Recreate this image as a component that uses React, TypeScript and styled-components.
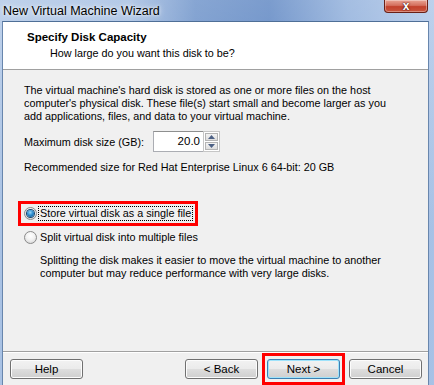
import React from "react";
import styled, { createGlobalStyle } from "styled-components";

const Global = createGlobalStyle`
  html, body { margin: 0; padding: 0; background: #6f93c6; }
  body { font-family: "Liberation Sans", Arial, sans-serif; font-size: 10.8px; color: #000; }
  * { box-sizing: border-box; }
`;

const Window = styled.div`
  width: 434px;
  height: 385px;
  display: flex;
  flex-direction: column;
  padding: 0 5px 0 2px;
  background:
    linear-gradient(to bottom, rgba(255,255,255,0.25), rgba(255,255,255,0) 60%),
    linear-gradient(to right, #a9c2e4 0%, #9cb8df 30%, #5f88c4 45%, #4f7bbd 62%, #86a8d8 80%, #a8c2e6 100%);
  overflow: hidden;
`;

const TitleBar = styled.div`
  height: 21px;
  flex: none;
  display: flex;
  align-items: flex-start;
  justify-content: space-between;
  padding-left: 1px;
`;

const Title = styled.div`
  font-family: "Liberation Sans", Arial, sans-serif;
  font-size: 12.5px;
  line-height: 12px;
  margin-top: 5px;
  color: #000;
  text-shadow: 0 0 6px rgba(255,255,255,0.9), 0 0 3px rgba(255,255,255,0.8);
`;

const CloseButton = styled.div`
  width: 44px;
  height: 13px;
  margin-right: 1px;
  border: 1px solid #6a2016;
  border-top: none;
  border-radius: 0 0 4px 4px;
  background: linear-gradient(to bottom, #e9a494 0%, #d4705e 45%, #c2412c 55%, #c8553f 100%);
  box-shadow: inset 0 0 0 1px rgba(255,255,255,0.35);
  display: flex;
  align-items: center;
  justify-content: center;
  color: #fff;
  font-weight: bold;
  font-size: 12px;
  line-height: 11px;
  text-shadow: 0 0 2px #4a120a, 0 0 1px #4a120a;
`;

const Client = styled.div`
  flex: 1;
  display: flex;
  flex-direction: column;
  background: #f0f0f0;
  border-top: 1px solid #4f6f97;
  border-left: 1px solid #6886ad;
  border-right: 1px solid #6886ad;
`;

const Header = styled.div`
  background: #fff;
  height: 48px;
  flex: none;
  border-bottom: 1px solid #a0a0a0;
  padding: 8px 0 0 24px;
  display: flex;
  flex-direction: column;
`;

const HeaderTitle = styled.div`
  font-weight: bold;
  font-size: 11.5px;
  line-height: 14px;
  color: #000;
`;

const HeaderSub = styled.div`
  margin-top: 2px;
  padding-left: 23px;
  line-height: 14px;
  color: #000;
`;

const Body = styled.div`
  flex: 1;
  padding: 14px 0 0 21px;
  display: flex;
  flex-direction: column;
  align-items: flex-start;
`;

const Paragraph = styled.p`
  margin: 0;
  line-height: 13px;
`;

const SizeRow = styled.div`
  display: flex;
  align-items: center;
  margin-top: 8px;
  height: 21px;
`;

const SizeLabel = styled.span`
  width: 129px;
`;

const NumberField = styled.div`
  display: flex;
  align-items: stretch;
  height: 21px;
`;

const NumberInput = styled.div`
  width: 50px;
  background: #fff;
  border: 1px solid #abadb3;
  border-top-color: #8e8f8f;
  border-right: none;
  text-align: right;
  padding-right: 3px;
  line-height: 19px;
  font-size: 11.5px;
`;

const Spinner = styled.div`
  width: 17px;
  display: flex;
  flex-direction: column;
  gap: 1px;
  background: #fff;
  border: 1px solid #c6c6c6;
  padding: 1px;
`;

const SpinButton = styled.div`
  flex: 1;
  border: 1px solid #b4b4b4;
  background: linear-gradient(to bottom, #f3f3f3, #dedede);
  display: flex;
  align-items: center;
  justify-content: center;
`;

const Recommended = styled.div`
  margin-top: 9px;
  line-height: 13px;
`;

const RadioGroup = styled.div`
  display: flex;
  flex-direction: column;
  align-items: flex-start;
  gap: 5px;
  margin-top: 30px;
`;

/* red annotation frame drawn around an element without moving it */
const Highlight = styled.div<{ $px: number; $py: number }>`
  display: flex;
  border: 3px solid #ff0000;
  padding: ${(p) => `${p.$py}px ${p.$px}px`};
  margin: ${(p) => `-${p.$py + 3}px -${p.$px + 3}px`};
`;

const RadioRow = styled.div`
  display: flex;
  align-items: center;
  height: 19px;
  white-space: nowrap;
  gap: 2px;
`;

const RadioCircle = styled.span<{ $checked?: boolean }>`
  width: 13px;
  height: 13px;
  border-radius: 50%;
  flex: none;
  border: 1px solid #8a8a8a;
  background: radial-gradient(circle at 50% 35%, #ffffff 0%, #f2f2f2 45%, #cfcfcf 100%);
  display: flex;
  align-items: center;
  justify-content: center;
  &::after {
    content: "";
    display: ${(p) => (p.$checked ? "block" : "none")};
    width: 7px;
    height: 7px;
    border-radius: 50%;
    background: radial-gradient(circle at 45% 35%, #9bd8f8 0%, #2f8fd0 45%, #0c4f86 100%);
    box-shadow: 0 0 0 1px #14466f;
  }
`;

const RadioLabel = styled.span<{ $focused?: boolean }>`
  line-height: 13px;
  padding: 0 1px;
  ${(p) => (p.$focused ? "outline: 1px dotted #000; outline-offset: 0;" : "")}
`;

const Description = styled.div`
  margin-top: 7px;
  padding-left: 16px;
  line-height: 12.5px;
`;

const Footer = styled.div`
  flex: none;
  height: 34px;
  border-top: 1px solid #a0a0a0;
  box-shadow: inset 0 1px 0 #fff;
  display: flex;
  align-items: flex-start;
  gap: 9px;
  padding: 7px 6px 0 7px;
`;

const Spacer = styled.div`
  flex: 1;
`;

const Button = styled.button<{ $default?: boolean }>`
  width: 73px;
  height: 20px;
  flex: none;
  font-family: "Liberation Sans", Arial, sans-serif;
  font-size: 11.5px;
  color: #000;
  padding: 0;
  border-radius: 3px;
  border: 1px solid ${(p) => (p.$default ? "#3c7fb1" : "#707070")};
  background: linear-gradient(to bottom, #f2f2f2 0%, #ebebeb 48%, #dddddd 52%, #cfcfcf 100%);
  box-shadow: inset 0 0 0 1px ${(p) => (p.$default ? "#9fe3fb" : "#fcfcfc")};
`;

const Arrow = ({ up }: { up?: boolean }) => (
  <svg width="7" height="4" viewBox="0 0 7 4">
    <path d={up ? "M0 4 L3.5 0 L7 4 Z" : "M0 0 L3.5 4 L7 0 Z"} fill="#4d6185" />
  </svg>
);

export default function App() {
  return (
    <>
      <Global />
      <Window>
        <TitleBar>
          <Title>New Virtual Machine Wizard</Title>
          <CloseButton>x</CloseButton>
        </TitleBar>
        <Client>
          <Header>
            <HeaderTitle>Specify Disk Capacity</HeaderTitle>
            <HeaderSub>How large do you want this disk to be?</HeaderSub>
          </Header>
          <Body>
            <Paragraph>
              The virtual machine's hard disk is stored as one or more files on the host
              <br />
              computer's physical disk. These file(s) start small and become larger as you
              <br />
              add applications, files, and data to your virtual machine.
            </Paragraph>
            <SizeRow>
              <SizeLabel>Maximum disk size (GB):</SizeLabel>
              <NumberField>
                <NumberInput>20.0</NumberInput>
                <Spinner>
                  <SpinButton>
                    <Arrow up />
                  </SpinButton>
                  <SpinButton>
                    <Arrow />
                  </SpinButton>
                </Spinner>
              </NumberField>
            </SizeRow>
            <Recommended>Recommended size for Red Hat Enterprise Linux 6 64-bit: 20 GB</Recommended>
            <RadioGroup>
              <Highlight $px={3} $py={0}>
                <RadioRow>
                  <RadioCircle $checked />
                  <RadioLabel $focused>Store virtual disk as a single file</RadioLabel>
                </RadioRow>
              </Highlight>
              <RadioRow>
                <RadioCircle />
                <RadioLabel>Split virtual disk into multiple files</RadioLabel>
              </RadioRow>
            </RadioGroup>
            <Description>
              Splitting the disk makes it easier to move the virtual machine to another
              <br />
              computer but may reduce performance with very large disks.
            </Description>
          </Body>
          <Footer>
            <Button>Help</Button>
            <Spacer />
            <Button>&lt; Back</Button>
            <Highlight $px={2} $py={3}>
              <Button $default>Next &gt;</Button>
            </Highlight>
            <Button>Cancel</Button>
          </Footer>
        </Client>
      </Window>
    </>
  );
}
